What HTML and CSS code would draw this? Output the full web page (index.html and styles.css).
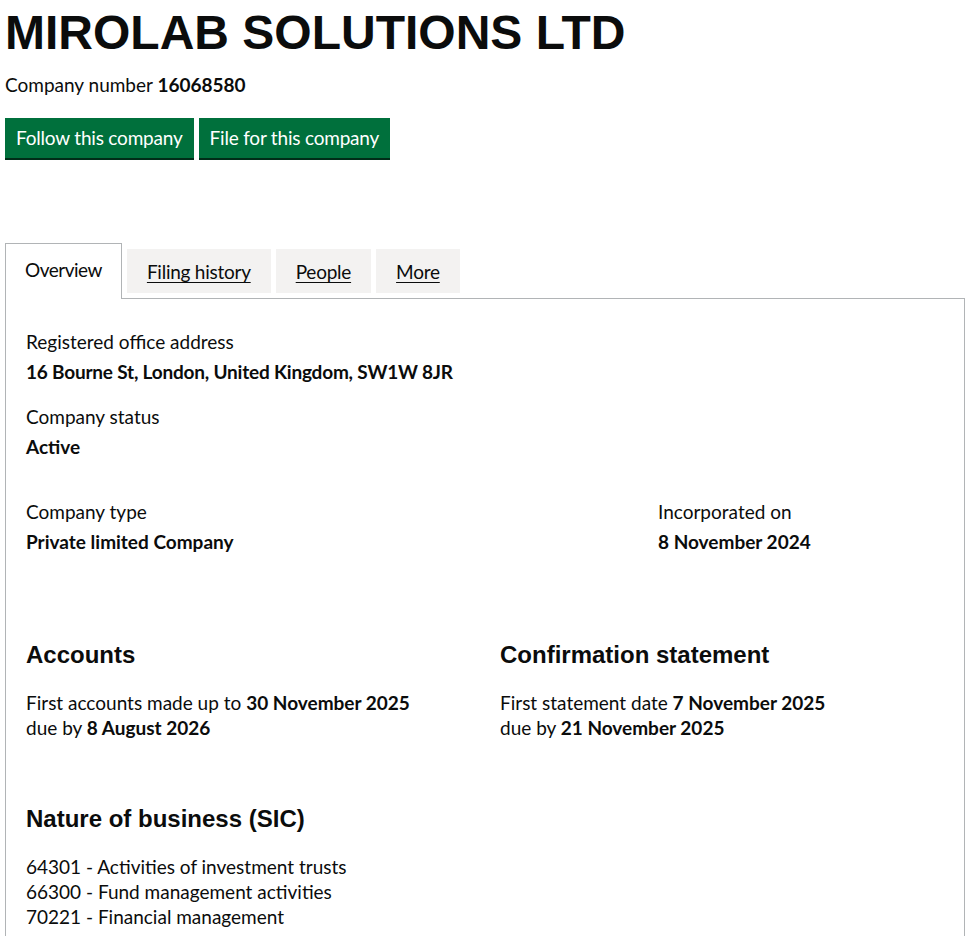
FILE: index.html
```html
<!DOCTYPE html>
<html lang="en">
<head>
<meta charset="utf-8">
<title>MIROLAB SOLUTIONS LTD</title>
<link rel="stylesheet" href="styles.css">
</head>
<body>
<div class="page">
  <h1 class="title">MIROLAB SOLUTIONS LTD</h1>
  <p class="company-number">Company number <strong>16068580</strong></p>
  <div class="actions">
    <a class="button" href="#">Follow this company</a>
    <a class="button" href="#">File for this company</a>
  </div>

  <div class="tabs">
    <ul class="tabs-list">
      <li class="tab tab-selected"><span class="tab-label">Overview</span></li>
      <li class="tab"><a class="tab-link" href="#">Filing history</a></li>
      <li class="tab"><a class="tab-link" href="#">People</a></li>
      <li class="tab"><a class="tab-link" href="#">More</a></li>
    </ul>
    <div class="panel">
      <dl class="field">
        <dt class="label">Registered office address</dt>
        <dd class="value value-address">16 Bourne St, London, United Kingdom, SW1W 8JR</dd>
      </dl>
      <dl class="field field-last">
        <dt class="label">Company status</dt>
        <dd class="value">Active</dd>
      </dl>

      <div class="row row-type">
        <dl class="field">
          <dt class="label">Company type</dt>
          <dd class="value">Private limited Company</dd>
        </dl>
        <dl class="field">
          <dt class="label">Incorporated on</dt>
          <dd class="value">8 November 2024</dd>
        </dl>
      </div>

      <div class="row row-dates">
        <div class="block">
          <h2 class="heading">Accounts</h2>
          <p class="text">First accounts made up to <strong>30 November 2025</strong><br>due by <strong>8 August 2026</strong></p>
        </div>
        <div class="block">
          <h2 class="heading">Confirmation statement</h2>
          <p class="text">First statement date <strong>7 November 2025</strong><br>due by <strong>21 November 2025</strong></p>
        </div>
      </div>

      <h2 class="heading">Nature of business (SIC)</h2>
      <ul class="sic-list">
        <li class="sic-item">64301 - Activities of investment trusts</li>
        <li class="sic-item">66300 - Fund management activities</li>
        <li class="sic-item">70221 - Financial management</li>
      </ul>
    </div>
  </div>
</div>
</body>
</html>
```

FILE: styles.css
```css
* {
  box-sizing: border-box;
}

html, body {
  margin: 0;
  padding: 0;
  background: #ffffff;
}

body {
  font-family: Lato, "Noto Sans", "Liberation Sans", sans-serif;
  font-size: 19px;
  line-height: 25px;
  color: #0b0c0c;
}

.page {
  width: 965px;
  padding-left: 5px;
}

.title {
  margin: 0;
  padding-top: 5px;
  font-family: "Liberation Sans", Arial, sans-serif;
  font-weight: 700;
  font-size: 48px;
  line-height: 56px;
  color: #0b0c0c;
}

.company-number {
  margin: 11px 0 0;
}

.company-number strong {
  font-weight: 700;
}

.actions {
  display: flex;
  gap: 5px;
  margin-top: 21px;
}

.button {
  display: inline-block;
  padding: 8px 9px 9px;
  border: 2px solid transparent;
  background: #00703c;
  box-shadow: 0 2px 0 #002d18;
  color: #ffffff;
  text-decoration: none;
  font-size: 19px;
  line-height: 19px;
  letter-spacing: -0.2px;
}

.tabs {
  margin-top: 91px;
}

.tabs-list {
  display: flex;
  align-items: flex-start;
  margin: 0;
  padding: 0;
  list-style: none;
}

.tab {
  margin-right: 5px;
  padding: 10px 20px 9px;
  background: #f3f2f1;
}

.tab-link {
  color: #0b0c0c;
  text-decoration: underline;
  text-decoration-thickness: 1px;
  text-underline-offset: 3px;
  letter-spacing: -0.25px;
}

.tab-selected {
  position: relative;
  z-index: 1;
  margin-top: -6px;
  padding: 13px 19px 17px;
  border: 1px solid #b1b4b6;
  border-bottom: 0;
  background: #ffffff;
}

.tab-label {
  letter-spacing: -0.5px;
}

.panel {
  position: relative;
  margin-top: -1px;
  width: 960px;
  padding: 30px 20px 8px;
  border: 1px solid #b1b4b6;
  border-bottom: 0;
}

.field {
  margin: 0 0 20px;
}

.field-last {
  margin-bottom: 40px;
}

.label {
  margin: 0;
}

.value {
  margin: 5px 0 0;
  font-weight: 700;
}

.value-address {
  letter-spacing: -0.2px;
}

.row {
  display: grid;
}

.row-type {
  grid-template-columns: 632px 1fr;
}

.row-type .field {
  margin-bottom: 0;
}

.row-dates {
  grid-template-columns: 474px 1fr;
  margin-top: 86px;
  margin-bottom: 64px;
}

.heading {
  margin: 0 0 20px;
  font-family: "Liberation Sans", Arial, sans-serif;
  font-weight: 700;
  font-size: 24px;
  line-height: 30px;
}

.text {
  margin: 0;
}

.text strong {
  font-weight: 700;
}

.sic-list {
  margin: 0;
  padding: 0;
  list-style: none;
}
```
